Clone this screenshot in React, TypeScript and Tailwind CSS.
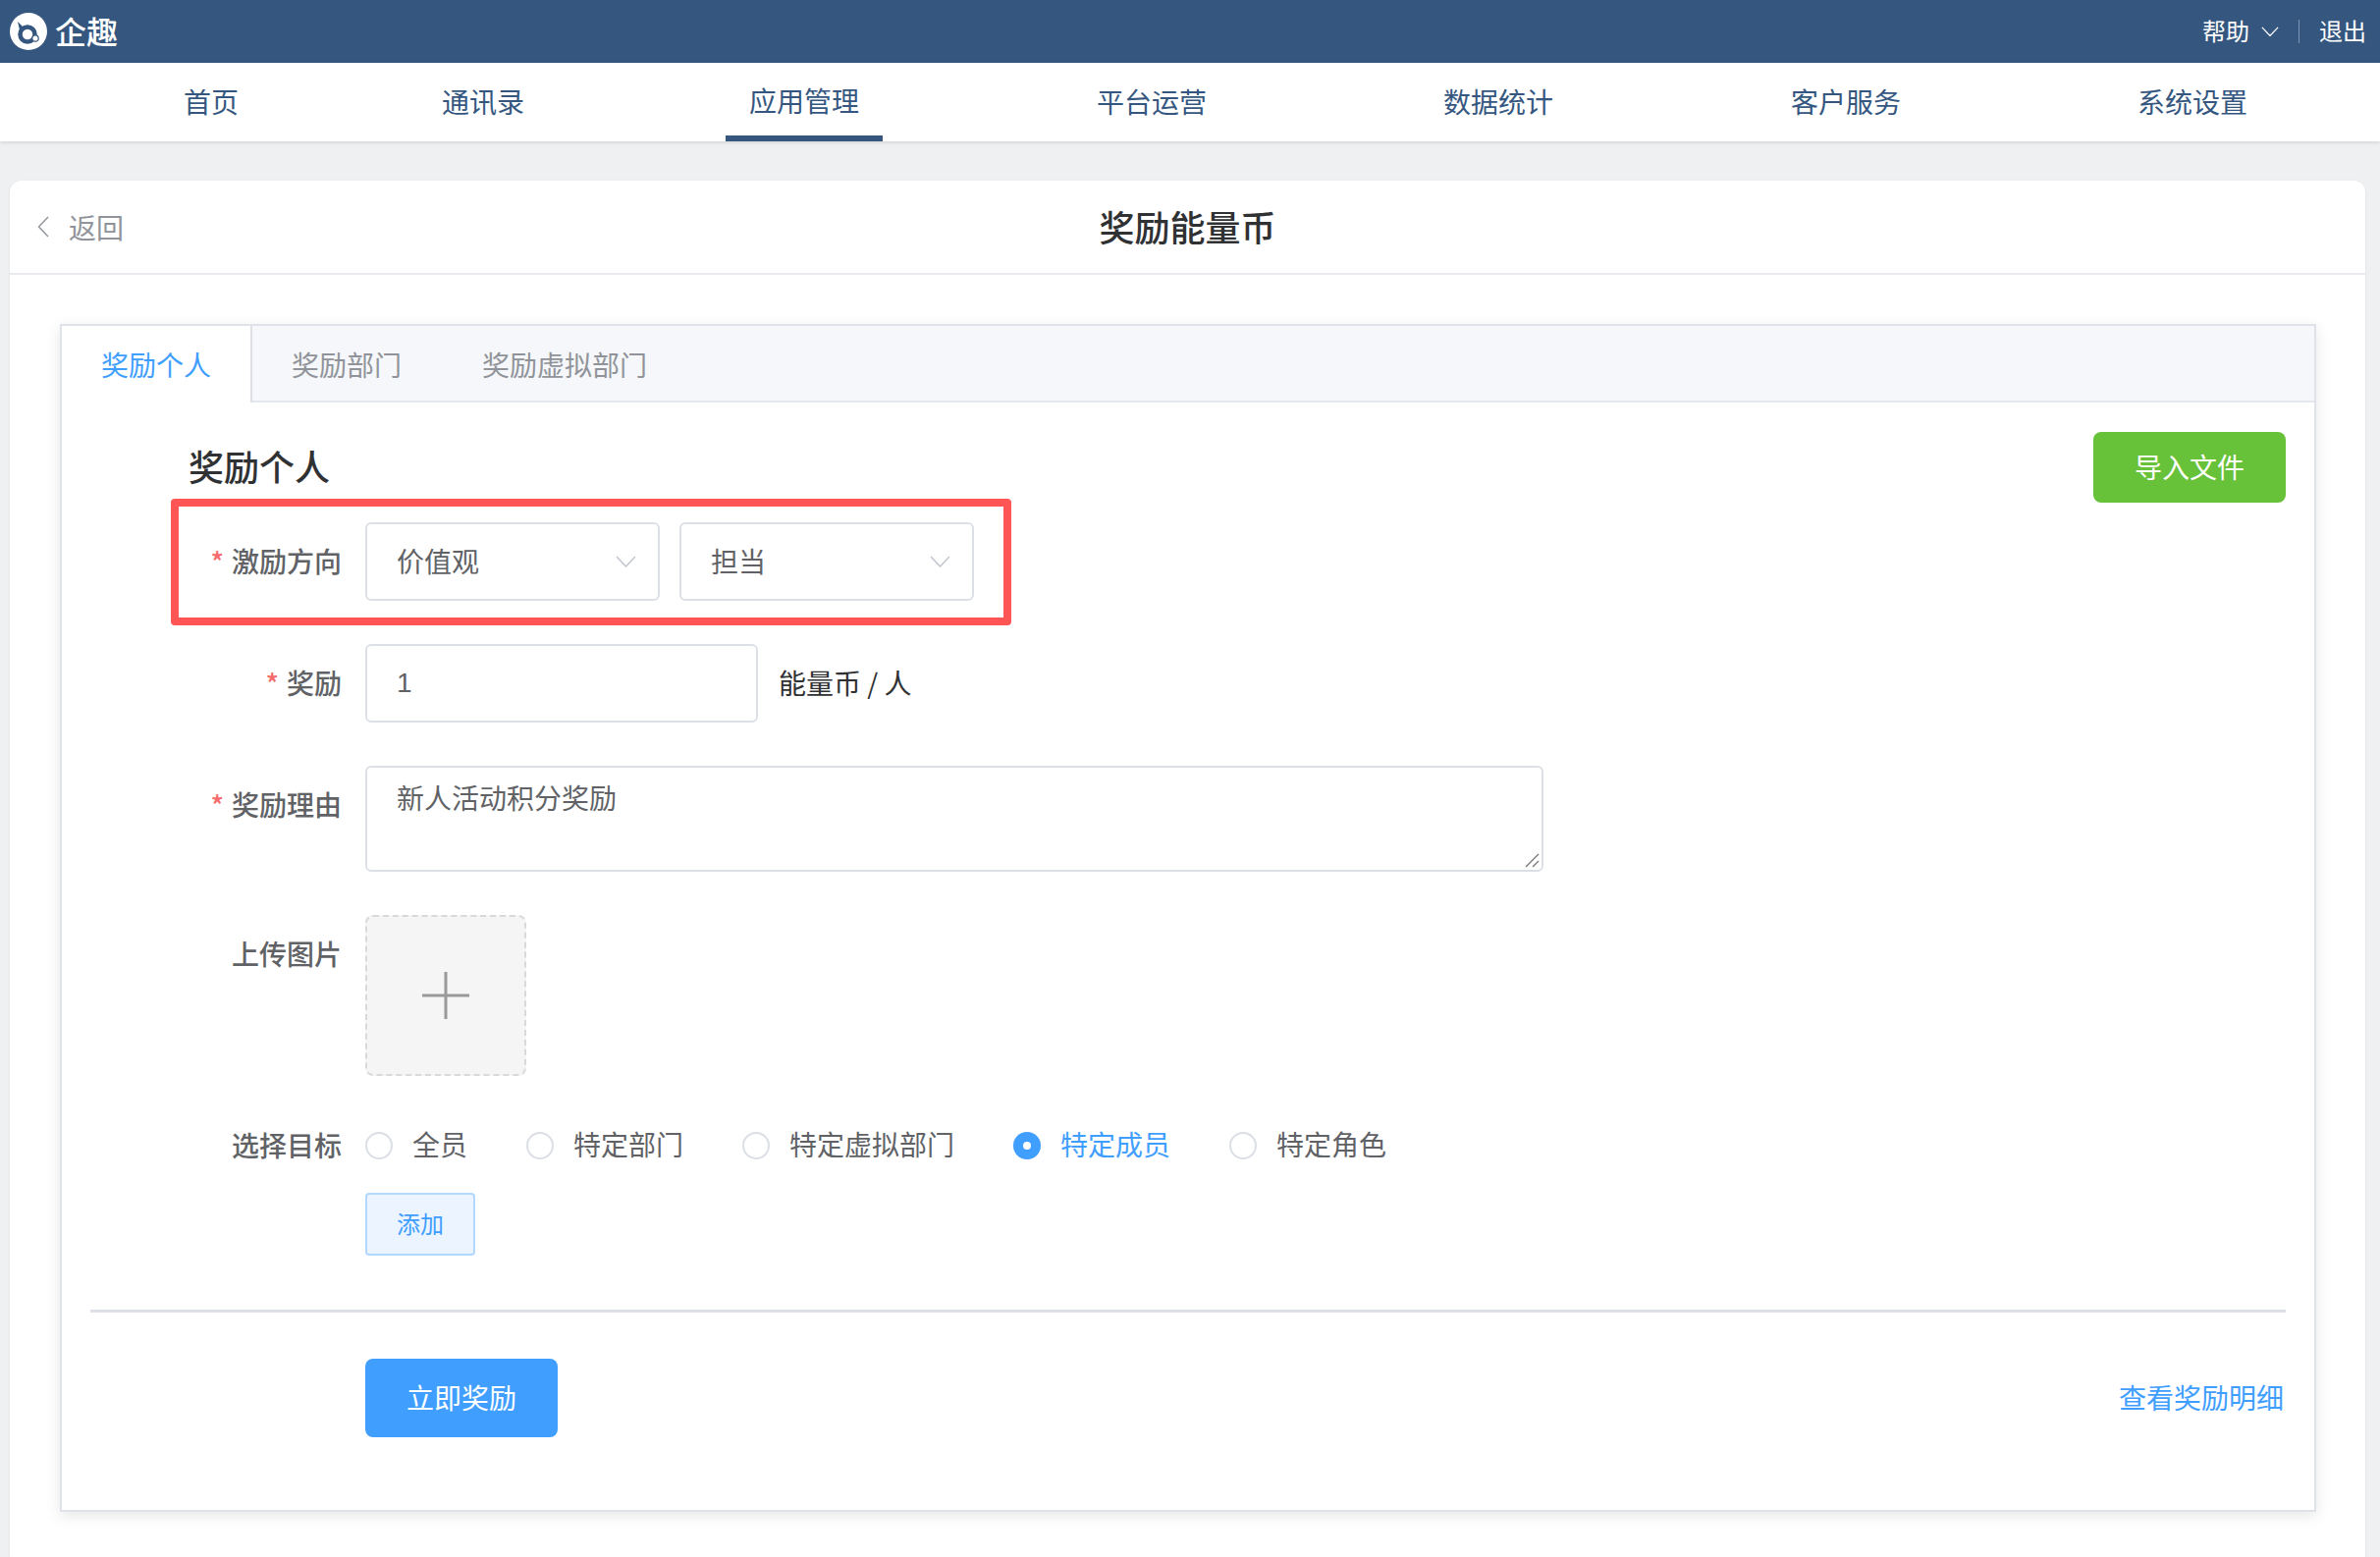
const navItems = [
  { label: "首页", gap: "ml-[163px]" },
  { label: "通讯录", gap: "ml-[159px]" },
  { label: "应用管理", gap: "ml-[181px]", active: true },
  { label: "平台运营", gap: "ml-[194px]" },
  { label: "数据统计", gap: "ml-[193px]" },
  { label: "客户服务", gap: "ml-[194px]" },
  { label: "系统设置", gap: "ml-[193px]" },
];

const radios = [
  { label: "全员" },
  { label: "特定部门" },
  { label: "特定虚拟部门" },
  { label: "特定成员", checked: true },
  { label: "特定角色" },
];

function Logo() {
  return (
    <svg width="38" height="38" viewBox="0 0 38 38">
      <circle cx="19" cy="19" r="19" fill="#ffffff" />
      <circle cx="18" cy="22" r="7.5" fill="none" stroke="#35577f" strokeWidth="4.5" />
      <path d="M8 9 L11 22 L14 15 Z" fill="#35577f" />
      <circle cx="26" cy="26" r="3.2" fill="#ffffff" stroke="#35577f" strokeWidth="1.2" />
    </svg>
  );
}

function Chevron({ width, color }: { width: number; color: string }) {
  return (
    <svg width={width} height={width * 0.6} viewBox="0 0 20 12" fill="none" stroke={color} strokeWidth="1.4">
      <path d="M1 1 L10 10.5 L19 1" />
    </svg>
  );
}

function FormLabel({ text, required }: { text: string; required?: boolean }) {
  return (
    <div className="h-[80px] w-[166px] shrink-0 text-right text-[28px] leading-[78px] font-medium text-[#606266]">
      {required && <span className="mr-[8px] text-[#f56c6c]">*</span>}
      {text}
    </div>
  );
}

function SelectBox({ value }: { value: string }) {
  return (
    <div className="flex h-[80px] w-[300px] items-center justify-between rounded-[6px] border-2 border-[#dcdfe6] bg-white pr-[22px] pl-[30px] text-[28px] text-[#606266]">
      <span className="pb-[3px]">{value}</span>
      <Chevron width={21} color="#c0c4cc" />
    </div>
  );
}

export default function App() {
  return (
    <div
      className="flex h-[1586px] flex-col overflow-hidden bg-[#eff0f2]"
      style={{ fontFamily: '"Noto Sans CJK SC", "Noto Sans", sans-serif' }}
    >
      <header className="flex h-[64px] shrink-0 items-center justify-between bg-[#35577f] pr-[14px] pl-[10px] text-white">
        <div className="flex items-center gap-[8px]">
          <Logo />
          <span className="pb-[3px] text-[32px] leading-none font-medium">企趣</span>
        </div>
        <div className="flex items-center text-[24px]">
          <span className="pb-[2px]">帮助</span>
          <span className="ml-[12px]">
            <Chevron width={18} color="#ffffff" />
          </span>
          <span className="mx-[20px] h-[24px] w-[1px] bg-[#7d95b3]" />
          <span className="pb-[2px]">退出</span>
        </div>
      </header>

      <nav className="flex h-[80px] shrink-0 bg-white shadow-[0_1px_4px_rgba(0,0,0,0.14)]">
        {navItems.map((item) => (
          <div
            key={item.label}
            className={`${item.gap} flex h-full items-center px-[24px] pb-[2px] text-[28px] text-[#35577f] ${
              item.active ? "border-b-[6px] border-[#35577f] pt-[4px]" : ""
            }`}
          >
            {item.label}
          </div>
        ))}
      </nav>

      <main className="mt-[40px] ml-[10px] w-[2399px] flex-1 rounded-t-[12px] bg-white shadow-[0_1px_3px_rgba(0,0,0,0.08)]">
        <div className="relative flex h-[96px] items-center justify-center border-b-2 border-[#e9ebef]">
          <div className="absolute left-[28px] flex items-center text-[28px] text-[#909399]">
            <svg width="12" height="22" viewBox="0 0 12 22" fill="none" stroke="#909399" strokeWidth="1.4">
              <path d="M11 1 L1.5 11 L11 21" />
            </svg>
            <span className="ml-[20px]">返回</span>
          </div>
          <h1 className="pb-[2px] text-[36px] font-medium text-[#303133]">奖励能量币</h1>
        </div>

        <section className="mt-[50px] ml-[51px] h-[1210px] w-[2298px] border-2 border-[#dfe2e8] shadow-[0_4px_14px_rgba(0,0,0,0.1)]">
          <div className="flex h-[78px] border-b-2 border-[#e4e7ed] bg-[#f5f7fa] text-[28px] leading-[78px]">
            <div className="-mb-[2px] h-[78px] border-r-2 border-[#dcdfe6] bg-white px-[40px] text-[#409eff]">奖励个人</div>
            <div className="pr-[41px] pl-[40px] text-[#909399]">奖励部门</div>
            <div className="px-[41px] text-[#909399]">奖励虚拟部门</div>
          </div>

          <div className="pt-[30px] pl-[29px]">
            <div className="flex h-[68px] items-start pr-[29px]">
              <h2 className="ml-[100px] text-[36px] leading-[68px] font-medium text-[#303133]">奖励个人</h2>
              <button className="ml-auto h-[72px] w-[196px] rounded-[8px] bg-[#67c23a] pb-[2px] text-[28px] text-white">导入文件</button>
            </div>

            <div className="ml-[82px] flex h-[129px] w-[856px] items-center rounded-[4px] border-8 border-[#ff5555] pb-[1px]">
              <FormLabel text="激励方向" required />
              <div className="ml-[24px] flex gap-[20px]">
                <SelectBox value="价值观" />
                <SelectBox value="担当" />
              </div>
            </div>

            <div className="mt-[19px] ml-[90px] flex">
              <FormLabel text="奖励" required />
              <div className="ml-[24px] flex h-[80px] w-[400px] items-center rounded-[6px] border-2 border-[#dcdfe6] pl-[30px] text-[28px] text-[#606266]">
                <span className="font-['Liberation_Sans']">1</span>
              </div>
              <span className="ml-[21px] text-[28px] leading-[78px] text-[#303133]">能量币 / 人</span>
            </div>

            <div className="mt-[44px] ml-[90px] flex">
              <FormLabel text="奖励理由" required />
              <div className="relative ml-[24px] h-[108px] w-[1200px] rounded-[6px] border-2 border-[#dcdfe6] px-[30px] pt-[9px] text-[28px] leading-[42px] text-[#606266]">
                新人活动积分奖励
                <svg width="16" height="16" viewBox="0 0 16 16" className="absolute right-[2px] bottom-[2px]">
                  <path d="M2 15 L15 2 M9 15 L15 9" stroke="#777777" strokeWidth="1.3" />
                </svg>
              </div>
            </div>

            <div className="mt-[44px] ml-[90px] flex">
              <FormLabel text="上传图片" />
              <div className="ml-[24px] flex h-[164px] w-[164px] items-center justify-center rounded-[8px] border-2 border-dashed border-[#d9d9d9] bg-[#f5f5f5]">
                <svg width="48" height="48" viewBox="0 0 48 48" stroke="#999999" strokeWidth="3">
                  <path d="M24 0 V48 M0 24 H48" />
                </svg>
              </div>
            </div>

            <div className="mt-[31px] ml-[90px] flex">
              <FormLabel text="选择目标" />
              <div className="ml-[24px] flex h-[80px] items-center gap-[60px]">
                {radios.map((r) => (
                  <div key={r.label} className="flex items-center gap-[20px]">
                    {r.checked ? (
                      <span className="flex h-[28px] w-[28px] items-center justify-center rounded-full bg-[#409eff]">
                        <span className="h-[8px] w-[8px] rounded-full bg-white" />
                      </span>
                    ) : (
                      <span className="h-[28px] w-[28px] rounded-full border-2 border-[#dcdfe6] bg-white" />
                    )}
                    <span className={`pb-[4px] text-[28px] ${r.checked ? "text-[#409eff]" : "text-[#606266]"}`}>{r.label}</span>
                  </div>
                ))}
              </div>
            </div>

            <button className="mt-[8px] ml-[280px] block h-[64px] w-[112px] rounded-[4px] border-2 border-[#b3d8ff] bg-[#ecf5ff] pb-[2px] text-[24px] text-[#409eff]">
              添加
            </button>

            <div className="mt-[55px] mr-[29px] border-t-[3px] border-[#dcdfe6]" />

            <div className="mt-[47px] flex items-center justify-between pr-[31px] pl-[280px]">
              <button className="h-[80px] w-[196px] rounded-[8px] bg-[#409eff] pb-[2px] text-[28px] text-white">立即奖励</button>
              <span className="pb-[2px] text-[28px] text-[#409eff]">查看奖励明细</span>
            </div>
          </div>
        </section>
      </main>
    </div>
  );
}
